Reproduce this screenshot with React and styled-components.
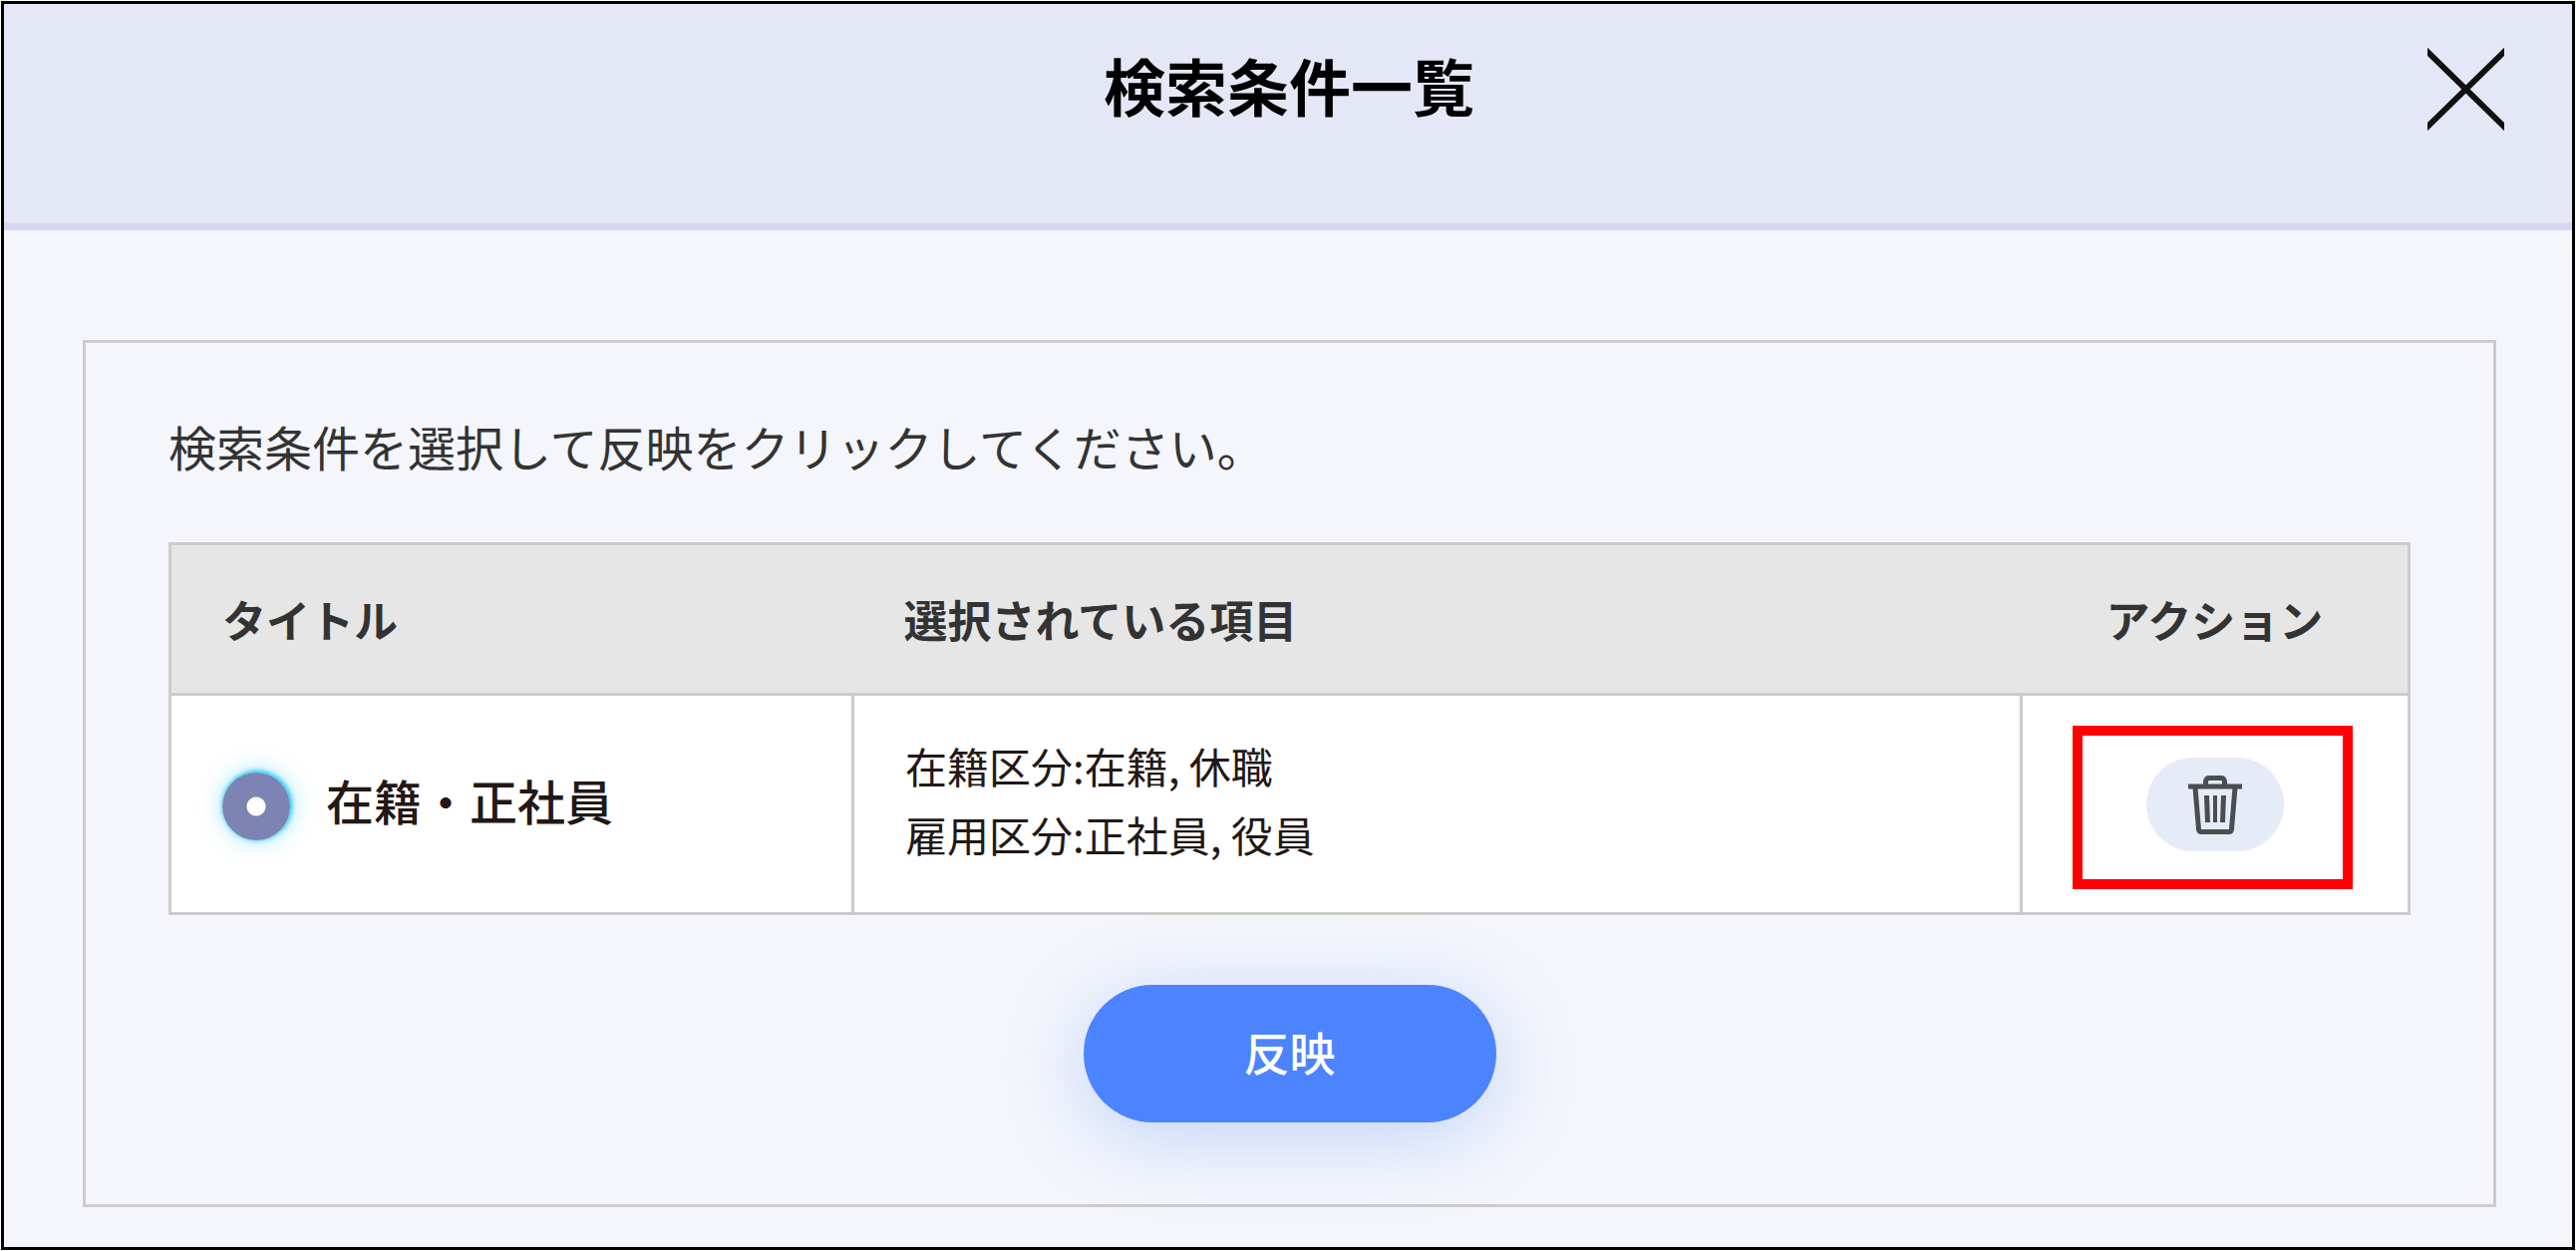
import {useState} from "react"
import styled, {createGlobalStyle} from "styled-components"

const colors={
    header:"#e4e8f6",
    headerLine:"#d5d8f0",
    background:"#f4f6fb",
    border:"#cccccc",
    tableHead:"#e6e6e6",
    text:"#333333",
    cellText:"#231815",
    primary:"#4c84ff",
    radio:"#7b84b2",
    danger:"#ff0000",
}

const GlobalStyle=createGlobalStyle`
    *{
        box-sizing:border-box;
    }
    body{
        margin:0;
        background-color:#fff;
        color:${colors.text};
        font-family:"Noto Sans CJK JP", "Noto Sans", sans-serif;
    }
    button{
        border:none;
        padding:0;
        font-family:inherit;
        cursor:pointer;
    }
`

const StyledPage=styled.div`
    display:flex;
    min-height:100vh;
    padding:1px;
`
const StyledModal=styled.section`
    display:flex;
    flex-direction:column;
    flex:1;
    border:3px solid #000;
    background-color:${colors.background};
`
const StyledHeader=styled.header`
    display:grid;
    grid-template-columns:1fr auto 1fr;
    align-items:start;
    padding:35px 68px 93px 70px;
    background-color:${colors.header};
    border-bottom:7px solid ${colors.headerLine};
`
const StyledTitle=styled.h1`
    grid-column:2;
    margin:0;
    color:#000;
    font-size:62px;
    font-weight:700;
    line-height:92px;
`
const StyledClose=styled.button`
    justify-self:end;
    margin-top:9px;
    background:none;
    line-height:0;
`
const StyledBody=styled.main`
    flex:1;
    padding:110px 76px 36px 79px;
`
const StyledPanel=styled.div`
    padding:67px 83px 82px;
    border:3px solid ${colors.border};
`
const StyledLead=styled.p`
    margin:0 0 61px;
    font-size:48px;
    line-height:72px;
`
const StyledTable=styled.table`
    width:100%;
    table-layout:fixed;
    border-collapse:collapse;
    border:3px solid ${colors.border};
`
const StyledCol=styled.col`
    width:${props=>props.$width};
`
const StyledTh=styled.th`
    height:151px;
    padding:0 51px;
    background-color:${colors.tableHead};
    font-size:44px;
    font-weight:700;
    line-height:64px;
    text-align:${props=>props.$align || "left"};
`
const StyledTd=styled.td`
    height:220px;
    padding:0 51px;
    border:3px solid ${colors.border};
    background-color:#fff;
    color:${colors.cellText};
    text-align:${props=>props.$align || "left"};
`
const StyledRadioLabel=styled.label`
    display:flex;
    align-items:center;
    gap:36px;
    padding-bottom:10px;
    font-size:48px;
    font-weight:500;
    line-height:72px;
    cursor:pointer;
`
const StyledRadio=styled.input`
    appearance:none;
    width:68px;
    height:68px;
    margin:14px 0 0;
    border-radius:50%;
    background:radial-gradient(circle, #fff 9px, ${colors.radio} 10px);
    box-shadow:1px -1px 4px 1px #22c8f5, 1px -1px 22px rgba(34,200,245,.5);
`
const StyledItems=styled.ul`
    margin:0;
    padding:0 0 10px;
    list-style:none;
    font-size:42px;
    line-height:69px;
`
const StyledAction=styled.div`
    position:relative;
    display:inline-flex;
    vertical-align:middle;
`
const StyledDelete=styled.button`
    display:flex;
    align-items:center;
    justify-content:center;
    width:138px;
    height:94px;
    border-radius:47px;
    background-color:#e5ecf7;
`
const StyledHighlight=styled.span`
    position:absolute;
    inset:-32px -69px -38px -74px;
    border:10px solid ${colors.danger};
    pointer-events:none;
`
const StyledFooter=styled.div`
    display:flex;
    justify-content:center;
    margin-top:70px;
`
const StyledSubmit=styled.button`
    width:414px;
    height:138px;
    padding-bottom:6px;
    border-radius:69px;
    background-color:${colors.primary};
    box-shadow:0 14px 80px rgba(76,132,255,.3);
    color:#fff;
    font-size:46px;
    font-weight:500;
`

function CloseIcon(){
    return(
        <svg width="77" height="83" viewBox="0 0 77 83" fill="none" stroke="#111" strokeWidth="6">
            <path d="M-3 1L80 82M80 1L-3 82"/>
        </svg>
    )
}

function TrashIcon(){
    return(
        <svg width="54" height="60" viewBox="0 0 54 60" fill="none" stroke="#4b4d50" strokeWidth="5" strokeLinejoin="round">
            <path d="M0 12H54"/>
            <path d="M17.5 11V7Q18 3.5 21 3.5H33Q36 3.5 36.5 7V11"/>
            <path d="M7 13L10.5 55Q11 57.5 13 57.5H41Q43 57.5 43.5 55L47 13"/>
            <path d="M18.5 21L19.5 48M35.5 21L34.5 48"/>
            <path d="M27 21V48" strokeWidth="4"/>
        </svg>
    )
}

const conditions=[
    {
        id:1,
        title:"在籍・正社員",
        items:["在籍区分:在籍, 休職", "雇用区分:正社員, 役員"],
    },
]

function ConditionRow({condition, selected, onSelect}){
    return(
        <tr>
            <StyledTd>
                <StyledRadioLabel>
                    <StyledRadio type="radio" name="condition" checked={selected} onChange={()=>onSelect(condition.id)}/>
                    {condition.title}
                </StyledRadioLabel>
            </StyledTd>
            <StyledTd>
                <StyledItems>
                    {condition.items.map(item=><li key={item}>{item}</li>)}
                </StyledItems>
            </StyledTd>
            <StyledTd $align="center">
                <StyledAction>
                    <StyledDelete type="button" aria-label="削除">
                        <TrashIcon/>
                    </StyledDelete>
                    <StyledHighlight/>
                </StyledAction>
            </StyledTd>
        </tr>
    )
}

function App(){
    const [selectedId, setSelectedId]=useState(1);
    return(
        <StyledPage>
            <GlobalStyle/>
            <StyledModal>
                <StyledHeader>
                    <StyledTitle>検索条件一覧</StyledTitle>
                    <StyledClose type="button" aria-label="閉じる">
                        <CloseIcon/>
                    </StyledClose>
                </StyledHeader>
                <StyledBody>
                    <StyledPanel>
                        <StyledLead>検索条件を選択して反映をクリックしてください。</StyledLead>
                        <StyledTable>
                            <colgroup>
                                <StyledCol $width="30.5%"/>
                                <StyledCol $width="52.2%"/>
                                <StyledCol $width="17.3%"/>
                            </colgroup>
                            <thead>
                                <tr>
                                    <StyledTh>タイトル</StyledTh>
                                    <StyledTh>選択されている項目</StyledTh>
                                    <StyledTh $align="center">アクション</StyledTh>
                                </tr>
                            </thead>
                            <tbody>
                                {conditions.map(condition=>(
                                    <ConditionRow
                                        key={condition.id}
                                        condition={condition}
                                        selected={condition.id===selectedId}
                                        onSelect={setSelectedId}
                                    />
                                ))}
                            </tbody>
                        </StyledTable>
                        <StyledFooter>
                            <StyledSubmit type="button">反映</StyledSubmit>
                        </StyledFooter>
                    </StyledPanel>
                </StyledBody>
            </StyledModal>
        </StyledPage>
    )
}

export default App;
